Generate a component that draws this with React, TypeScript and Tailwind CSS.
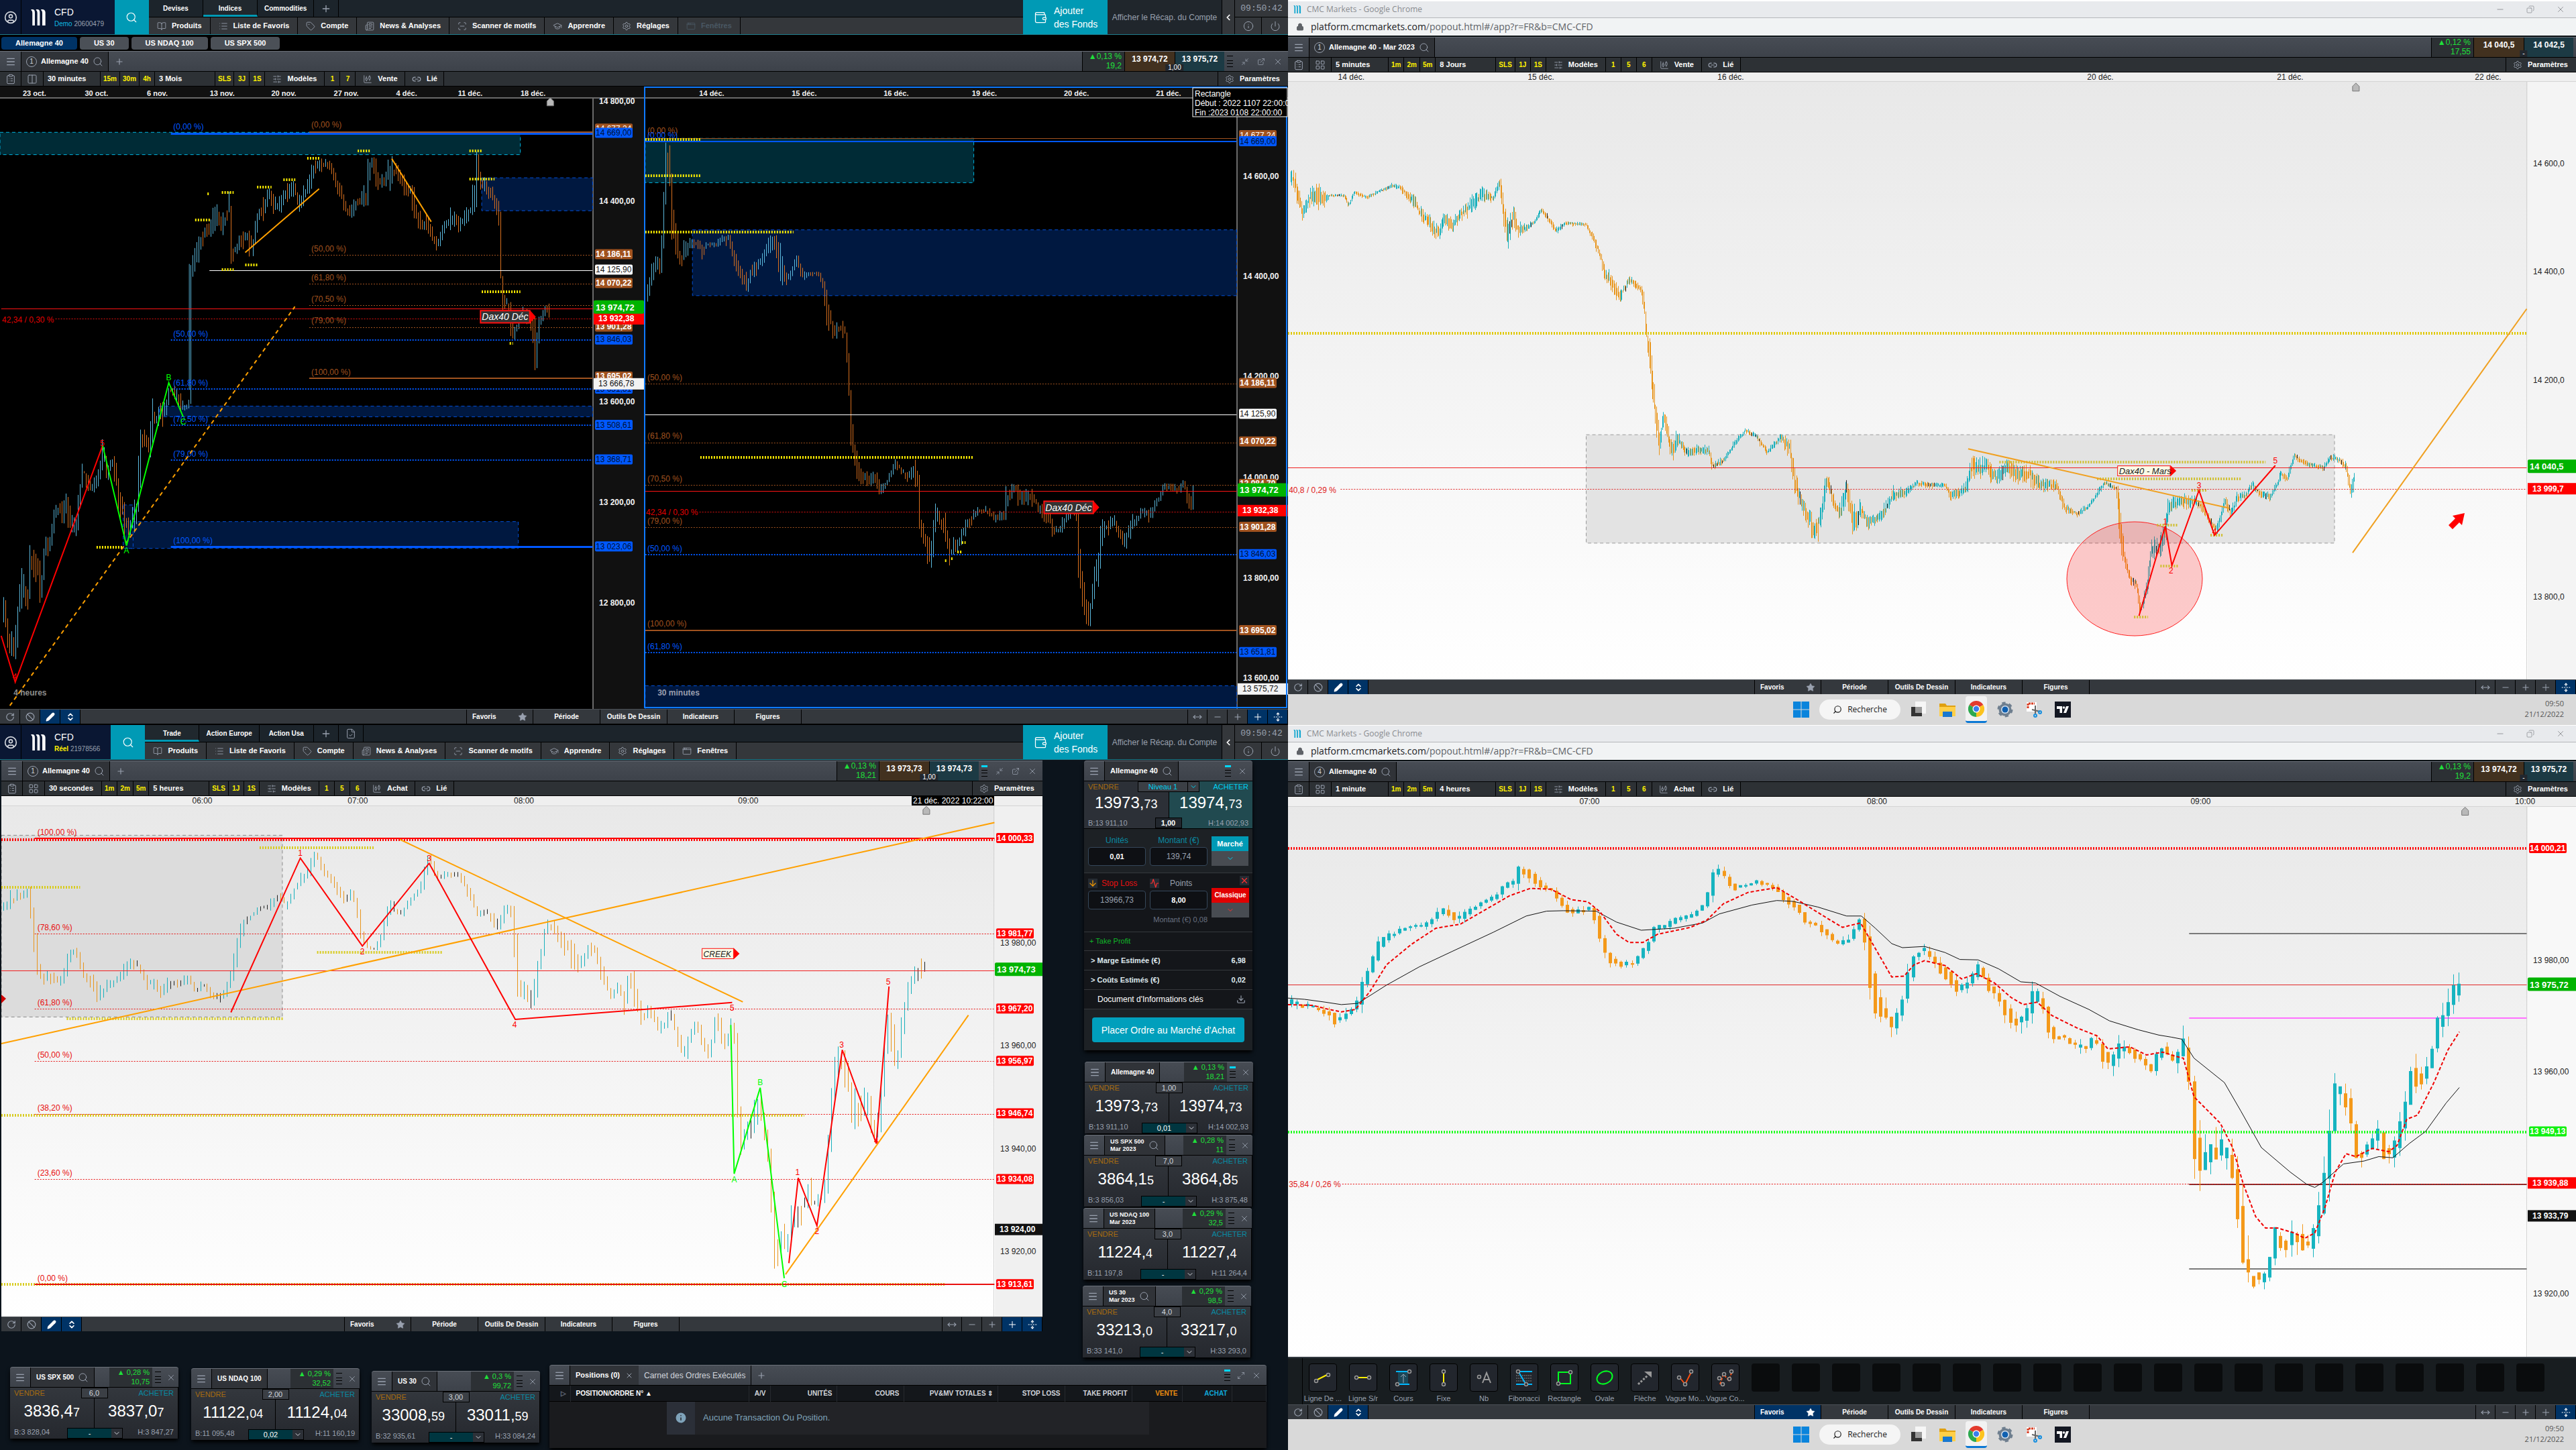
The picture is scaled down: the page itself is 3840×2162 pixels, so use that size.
import React, { createContext, useContext } from 'react';
import {
  Search,
  CircleUser,
  Menu,
  Plus,
  Minus,
  X,
  List,
  Tag as TagIcon,
  Newspaper,
  ScanLine,
  GraduationCap,
  Settings,
  AppWindow,
  Wallet,
  Info,
  Power,
  ChevronLeft,
  ChevronDown,
  BookOpen,
  SlidersHorizontal,
  ChartCandlestick,
  Link2,
  RotateCcw,
  Ban,
  Pencil,
  ChevronsUpDown,
  Star,
  MoveHorizontal,
  UnfoldVertical,
  Minimize2,
  Maximize2,
  ExternalLink,
  ClipboardList,
  Columns2,
  LayoutGrid,
  Lock,
  Copy,
  Download,
  ArrowDown,
  Activity,
  FileCheck,
} from 'lucide-react';

/* ---------- plot primitives ---------- */

type Pt = number[];

interface Scale {
  x: (v: number) => number;
  y: (v: number) => number;
  ax: number;
}

const makeScale = (kx: number, ky: number, dy: number, ax: number): Scale => ({
  x: (v) => Math.round(v * kx * 10) / 10,
  y: (v) => Math.round((v * ky + dy) * 10) / 10,
  ax,
});

const PlotScale = createContext<Scale>(makeScale(1, 1, 0, 0));

interface LineProps {
  p: Pt[];
  c: string;
  w?: number;
  dash?: string;
}

const Poly: React.FC<LineProps> = ({ p, c, w = 1, dash }) => {
  const s = useContext(PlotScale);
  // horizontal lines snap to the pixel grid
  const level = p.length === 2 && p[0][1] === p[1][1];
  const fy = (y: number) => (level ? Math.round(s.y(y)) + (w % 2) / 2 : s.y(y));
  return (
    <polyline
      points={p.map(([x, y]) => `${s.x(x)},${fy(y)}`).join(' ')}
      fill="none"
      stroke={c}
      strokeWidth={w}
      strokeDasharray={dash}
    />
  );
};

const Dots: React.FC<{ rows: number[][]; c?: string; w?: number }> = ({ rows, c = '#ffee00', w = 4 }) => (
  <>
    {rows.map(([x1, x2, y], i) => (
      <Poly key={i} p={[[x1, y], [x2, y]]} c={c} w={w} dash="2 2" />
    ))}
  </>
);

interface BoxProps {
  a: Pt;
  b: Pt;
  fill: string;
  stroke: string;
  opacity?: number;
}

const Box: React.FC<BoxProps> = ({ a, b, fill, stroke, opacity = 1 }) => {
  const s = useContext(PlotScale);
  return (
    <rect
      x={s.x(a[0])}
      y={s.y(a[1])}
      width={s.x(b[0]) - s.x(a[0])}
      height={s.y(b[1]) - s.y(a[1])}
      fill={fill}
      fillOpacity={opacity}
      stroke={stroke}
      strokeDasharray="5 4"
    />
  );
};

interface TxProps {
  at: Pt;
  c: string;
  size?: number;
  bold?: boolean;
  mid?: boolean;
  children: React.ReactNode;
}

const Tx: React.FC<TxProps> = ({ at, c, size = 12, bold, mid, children }) => {
  const s = useContext(PlotScale);
  return (
    <text
      x={s.x(at[0])}
      y={s.y(at[1]) + 4}
      fill={c}
      fontSize={size}
      fontWeight={bold ? 700 : 400}
      textAnchor={mid ? 'middle' : 'start'}
    >
      {children}
    </text>
  );
};

interface PriceTagProps {
  y: number;
  bg: string;
  c: string;
  wide?: boolean;
  big?: boolean;
  bold?: boolean;
  children: React.ReactNode;
}

const PriceTag: React.FC<PriceTagProps> = ({ y, bg, c, wide, big, bold, children }) => {
  const s = useContext(PlotScale);
  const h = big ? 20 : wide ? 17 : 15;
  return (
    <g>
      <rect x={s.ax + (wide || big ? 0 : 2)} y={s.y(y) - h / 2} width={wide || big ? 75 : 56} height={h} rx={wide ? 0 : 2} fill={bg} />
      <text x={s.ax + (wide ? 7 : 3)} y={s.y(y) + (big ? 5 : 4)} fill={c} fontSize={big ? 13 : 12} fontWeight={bold ? 700 : 400}>
        {children}
      </text>
    </g>
  );
};

// small deterministic generator so the bars do not move between renders
const rng = (seed: number) => () => {
  seed = (seed * 16807) % 2147483647;
  return seed / 2147483647;
};

const sample = (path: Pt[], x: number) => {
  let i = 1;
  while (i < path.length - 1 && path[i][0] < x) i++;
  const [x0, y0, a0 = 20] = path[i - 1];
  const [x1, y1, a1 = 20] = path[i];
  const t = Math.min(1, Math.max(0, (x - x0) / (x1 - x0)));
  return [y0 + (y1 - y0) * t, a0 + (a1 - a0) * t];
};

interface BarsProps {
  path: Pt[];
  step: number;
  seed: number;
  up: string;
  down: string;
  flat?: string;
  flatAt?: number;
  w?: number;
  body?: number;
  amp?: number;
}

const Bars: React.FC<BarsProps> = ({ path, step, seed, up, down, flat, flatAt = 1, w = 1, body = 0, amp = 1 }) => {
  const s = useContext(PlotScale);
  const rand = rng(seed);
  const out: React.ReactNode[] = [];
  for (let x = path[0][0]; x <= path[path.length - 1][0]; x += step) {
    const [o] = sample(path, x - step);
    const [y, a] = sample(path, x);
    const close = y + (rand() - 0.5) * a * amp;
    const hi = Math.min(o, close) - a * (0.1 + rand() * 0.9) * amp;
    const lo = Math.max(o, close) + a * (0.1 + rand() * 0.9) * amp;
    const color = flat && Math.abs(close - o) < flatAt ? flat : close < o ? up : down;
    const px = Math.round(s.x(x)) + 0.5;
    out.push(
      <g key={x} stroke={color} fill={color}>
        <line x1={px} x2={px} y1={s.y(hi)} y2={s.y(lo)} strokeWidth={w} />
        {body > 0 && (
          <rect
            x={px - body / 2}
            y={s.y(Math.min(o, close) - a * 0.2)}
            width={body}
            height={Math.max(2, s.y(Math.max(o, close) + a * 0.4) - s.y(Math.min(o, close)))}
            stroke="none"
          />
        )}
      </g>
    );
  }
  return <>{out}</>;
};

const Callout: React.FC<{ a: Pt; b: Pt; dark?: boolean; size?: number; children: string }> = ({ a, b, dark, size = 14, children }) => {
  const s = useContext(PlotScale);
  const x2 = s.x(b[0]);
  const y1 = s.y(a[1]);
  const y2 = s.y(b[1]);
  const my = (y1 + y2) / 2;
  return (
    <g>
      <path d={`M${x2} ${y1 - 1} L${x2 + 9} ${my} L${x2} ${y2 + 1}Z`} fill="#ff0000" />
      <rect x={s.x(a[0])} y={y1} width={x2 - s.x(a[0])} height={y2 - y1} fill={dark ? '#333333' : '#fafae6'} stroke="#ff1010" strokeWidth={dark ? 2 : 1} />
      <text x={s.x(a[0]) + 2} y={my + 5} fontSize={size} fontStyle="italic" fill={dark ? '#ffffff' : '#222222'}>
        {children}
      </text>
    </g>
  );
};

const Marker: React.FC<{ at: Pt }> = ({ at }) => {
  const s = useContext(PlotScale);
  const x = s.x(at[0]);
  const y = s.y(at[1]);
  return <path d={`M${x} ${y - 6} l5 5 v7 h-10 v-7z`} fill="#b9b9b9" stroke="#777" />;
};

interface PlotProps {
  s: Scale;
  className: string;
  dark?: boolean;
  head: number;
  dates: [string, number][];
  dateY: number;
  prices: [string, number][];
  axisBg?: string;
  children: React.ReactNode;
}

const Plot: React.FC<PlotProps> = ({ s, className, dark, head, dates, dateY, prices, axisBg, children }) => (
  <PlotScale.Provider value={s}>
    <svg className={`block w-full ${className}`}>
      <rect x={s.ax} y={0} width="200" height="100%" fill={axisBg ?? '#111111'} />
      <rect x={0} y={0} width="100%" height={head} fill={dark ? '#111111' : '#efefef'} />
      <rect x={0} y={head} width="100%" height={dark ? 2 : 1} fill={dark ? '#6a6a6a' : '#d4d4d4'} />
      <rect x={s.ax - 2} y={head + 1} width={dark ? 2 : 1} height="100%" fill={dark ? '#6a6a6a' : '#d4d4d4'} />
      {dates.map(([t, x]) => (
        <Tx key={t} at={[x, dateY]} c={dark ? '#f2f2f2' : '#222222'} size={dark ? 11 : 12} bold={dark} mid>
          {t}
        </Tx>
      ))}
      {prices.map(([t, y]) => (
        <text key={t} x={s.ax + 8} y={s.y(y) + 4} fontSize={12} fontWeight={dark ? 700 : 400} fill={dark ? '#f2f2f2' : '#222222'}>
          {t}
        </text>
      ))}
      {children}
    </svg>
  </PlotScale.Provider>
);

/* ---------- chart data ---------- */

const DAX_4H: Pt[] = [
  [8, 1300, 45], [20, 1370, 40], [37, 1380, 50], [42, 1290], [52, 1220, 40], [65, 1260, 40], [72, 1160, 30], [85, 1180, 30],
  [97, 1230, 50], [108, 1120, 30], [115, 1140], [125, 1090], [133, 1040], [148, 1045], [160, 1020, 50], [170, 1080], [182, 1090, 30],
  [190, 1010, 30], [198, 945], [210, 970], [220, 990], [232, 970], [250, 900, 40], [258, 950], [270, 920], [280, 950, 30],
  [290, 1020, 40], [300, 1060, 30], [310, 1090], [330, 1040, 40], [335, 960, 50], [342, 850, 50], [352, 870], [362, 890],
  [370, 810, 40], [380, 820], [390, 790, 30], [398, 810, 30], [405, 760, 30], [412, 740], [422, 750], [430, 760, 30], [440, 790],
  [450, 790, 15], [459, 775, 10], [462, 450, 20], [466, 450], [475, 420, 30], [485, 380, 30], [500, 345], [510, 350], [525, 300, 40],
  [535, 350], [545, 320, 30], [556, 290, 40], [560, 400, 50], [570, 400, 15], [580, 380], [600, 370, 25], [612, 400, 30],
  [618, 350], [630, 300], [640, 290, 30], [655, 260, 15], [665, 300], [680, 290], [695, 260, 30], [715, 245, 20], [722, 290],
  [735, 275], [750, 240], [760, 200, 25], [775, 190, 15], [785, 190], [800, 190, 10], [812, 225], [825, 260, 30], [840, 300],
  [852, 310, 15], [865, 280], [880, 270], [890, 270, 40], [897, 190, 30], [905, 180, 15], [915, 230, 30], [930, 230], [940, 220],
  [946, 240, 60], [955, 200], [970, 210], [985, 250], [1000, 260], [1010, 310, 35], [1025, 340], [1035, 330], [1050, 370],
  [1062, 390, 15], [1075, 350], [1090, 330, 30], [1100, 320, 30], [1115, 340], [1130, 320], [1145, 300], [1155, 260, 50],
  [1160, 170, 60], [1165, 230, 30], [1175, 240], [1190, 260, 30], [1200, 270], [1210, 300], [1216, 340, 30], [1219, 520, 30],
  [1225, 530], [1240, 540], [1244, 620, 25], [1250, 600], [1260, 580, 15], [1270, 560], [1280, 560], [1295, 590],
  [1298, 640, 40], [1302, 660, 60], [1308, 590, 30], [1320, 560], [1328, 540, 15], [1336, 560],
];

const DAX_30M: Pt[] = [
  [8, 510, 40], [15, 460], [25, 445], [40, 430, 30], [46, 300, 90], [52, 190, 50], [60, 190, 50], [66, 330, 50], [75, 360, 40],
  [85, 430], [95, 410, 30], [105, 390], [118, 380, 12], [140, 400], [150, 388, 8], [175, 385, 10], [190, 372, 8], [205, 375, 15],
  [215, 415], [225, 440], [240, 475, 15], [250, 480, 30], [260, 450], [275, 440], [290, 410], [300, 390], [318, 380], [325, 430],
  [331, 450, 50], [345, 470], [355, 465, 15], [370, 420], [385, 465, 12], [400, 458, 6], [425, 460, 7], [435, 490, 15], [445, 560, 25],
  [455, 580, 20], [462, 610], [470, 590], [480, 590], [490, 610], [495, 700, 30], [500, 800, 30], [506, 900, 50], [515, 920, 40],
  [525, 970, 25], [535, 960], [550, 970, 15], [560, 955, 15], [572, 990, 15], [585, 980, 12], [595, 960, 10], [610, 925, 10],
  [625, 945, 10], [640, 960, 10], [655, 940, 15], [665, 980, 40], [670, 1080, 30], [680, 1110], [694, 1160, 35], [702, 1080, 50],
  [710, 1050, 30], [722, 1080], [730, 1070, 30], [740, 1150, 30], [750, 1130], [765, 1120], [780, 1080], [795, 1060], [815, 1040, 12],
  [835, 1045, 10], [855, 1060, 15], [875, 1050, 15], [882, 1000, 30], [890, 1000], [902, 985, 25], [915, 1010], [930, 1010],
  [945, 1010, 25], [960, 1040, 15], [980, 1050], [995, 1090], [1010, 1090, 12], [1025, 1060, 15], [1040, 1040, 12], [1055, 1060],
  [1057, 1180, 50], [1065, 1240, 30], [1080, 1310, 30], [1090, 1250], [1097, 1200, 30], [1108, 1150, 60], [1112, 1090, 30],
  [1125, 1080], [1145, 1070], [1155, 1100], [1168, 1120], [1180, 1090, 25], [1195, 1070], [1210, 1045, 12], [1230, 1055, 15],
  [1245, 1020, 12], [1255, 1010, 12], [1263, 980, 12], [1280, 985, 12], [1300, 990, 12], [1310, 975, 10], [1320, 1000, 12],
  [1330, 1030, 30], [1336, 1010, 30],
];

const DAX_5M: Pt[] = [
  [3, 250, 25], [8, 260, 30], [17, 340], [25, 300], [35, 290, 35], [45, 300], [50, 293, 4], [68, 293, 4], [73, 318, 8], [80, 285, 5],
  [95, 298, 5], [110, 283, 5], [125, 270, 6], [137, 275, 8], [145, 295, 12], [155, 310], [160, 340], [170, 355], [182, 385],
  [190, 345], [200, 365], [210, 335], [222, 320], [235, 290], [250, 300, 10], [257, 260, 10], [262, 340, 30], [267, 390, 35],
  [273, 340, 40], [280, 380], [290, 370, 8], [300, 355, 8], [308, 325, 8], [318, 355, 8], [326, 380, 8], [336, 360, 6], [362, 362, 5],
  [370, 390, 10], [378, 430, 12], [385, 480], [395, 510], [403, 535], [415, 495, 12], [430, 520, 10], [433, 560, 20], [436, 630],
  [440, 680, 35], [445, 790, 40], [451, 890, 35], [457, 820], [466, 910, 30], [473, 880], [485, 912, 12], [500, 905, 12],
  [512, 910, 12], [516, 945, 10], [530, 930, 8], [540, 900, 8], [556, 858, 6], [570, 875, 8], [583, 912, 8], [590, 895, 8],
  [600, 875, 10], [610, 900, 25], [616, 980, 35], [625, 1040], [632, 1060, 25], [640, 1110, 35], [650, 1050, 35], [655, 975],
  [665, 1040], [672, 1050, 25], [679, 1000, 30], [688, 1080, 35], [697, 1050, 25], [705, 1080], [720, 1070, 15], [735, 1015],
  [750, 1010, 12], [765, 985, 8], [780, 990, 8], [800, 992, 6], [806, 1015, 12], [825, 1000], [832, 940, 30], [840, 950, 25],
  [850, 945, 25], [862, 975], [875, 945], [890, 965], [900, 960, 25], [915, 990], [935, 990, 15], [945, 1045, 12], [960, 1060, 8],
  [975, 1040, 8], [985, 1010, 8], [993, 985, 6], [1008, 1000, 8], [1012, 1080, 50], [1018, 1170, 25], [1025, 1220, 10],
  [1033, 1230, 15], [1037, 1290, 15], [1045, 1240], [1050, 1150, 25], [1060, 1140, 25], [1066, 1110, 50], [1072, 1040],
  [1085, 1030, 15], [1100, 1030], [1112, 1040, 12], [1120, 1070, 10], [1130, 1100, 12], [1140, 1030, 15], [1147, 1060, 15],
  [1155, 1020, 12], [1165, 1015, 12], [1173, 990, 12], [1182, 1010, 12], [1195, 1020, 10], [1203, 990, 10], [1208, 965, 10],
  [1216, 975, 10], [1224, 920, 8], [1240, 940, 8], [1260, 950, 8], [1268, 925, 8], [1280, 930, 10], [1288, 950, 12],
  [1293, 1010], [1299, 960],
];

const DAX_30S: Pt[] = [
  [3, 330], [10, 310, 25], [20, 300], [38, 290, 15], [45, 370, 30], [52, 500, 30], [60, 540], [70, 525], [80, 540], [90, 530],
  [100, 470], [110, 445, 10], [120, 520], [135, 540], [145, 590, 25], [155, 555, 15], [170, 540, 12], [190, 490, 25], [205, 500, 15],
  [215, 545], [230, 550], [238, 570, 15], [250, 540], [265, 550, 15], [278, 530], [290, 570, 8], [300, 550, 15], [315, 580, 12],
  [326, 590], [335, 570, 12], [345, 520], [352, 440, 25], [362, 370], [375, 350, 12], [385, 330, 12], [395, 335, 10], [405, 310, 15],
  [412, 290], [425, 325], [440, 270, 15], [450, 250], [460, 220], [468, 180, 20], [475, 200], [485, 240, 15], [495, 255, 12],
  [505, 290], [515, 310, 12], [525, 290, 15], [533, 350], [538, 410], [550, 450, 5], [560, 450, 5], [570, 400, 15], [580, 330, 25],
  [590, 340], [597, 350, 12], [610, 315, 10], [622, 285, 8], [630, 260], [637, 180, 30], [645, 220], [655, 250, 12], [665, 235, 12],
  [685, 240, 12], [700, 290], [712, 350, 10], [725, 340], [740, 385], [750, 350, 25], [762, 320, 12], [768, 440, 50],
  [775, 600, 50], [782, 560, 25], [790, 590, 40], [796, 600, 50], [803, 500, 40], [815, 380], [825, 385], [835, 420],
  [850, 450, 40], [860, 500, 35], [870, 480], [880, 440], [890, 470], [900, 530, 25], [912, 580, 15], [922, 560, 15],
  [932, 600, 45], [940, 500, 25], [950, 600, 45], [960, 650], [970, 620], [985, 680], [1000, 640, 25], [1010, 690, 25],
  [1020, 760], [1030, 690, 30], [1040, 660], [1050, 720], [1060, 750], [1070, 630, 30], [1080, 720, 25], [1090, 720, 30],
  [1096, 640, 50], [1101, 850, 50], [1107, 1020, 60], [1115, 960, 40], [1125, 930, 50], [1131, 900, 50], [1140, 930, 60],
  [1147, 1020, 40], [1153, 1180, 50], [1160, 1340, 50], [1168, 1270, 40], [1175, 1290, 50], [1185, 1190, 50], [1195, 1190, 60],
  [1208, 1130, 50], [1215, 1190, 30], [1225, 1150, 40], [1235, 1110, 50], [1240, 920, 50], [1247, 800, 40], [1253, 750],
  [1262, 790, 45], [1272, 930, 70], [1285, 900, 50], [1297, 880, 50], [1307, 980, 40], [1315, 930, 30], [1322, 760, 50],
  [1330, 620, 50], [1337, 780, 50], [1345, 740, 50], [1352, 610, 30], [1362, 540, 25], [1372, 500, 45], [1384, 500, 45],
];

const DAX_1M: Pt[] = [
  [4, 685, 12], [10, 690, 12], [20, 690, 10], [40, 705, 8], [55, 715, 15], [58, 730, 20], [75, 700, 10], [85, 680, 15], [90, 630],
  [100, 590, 15], [110, 540, 15], [120, 520, 8], [145, 495, 8], [165, 495, 6], [180, 465, 10], [190, 455, 10], [205, 480, 12],
  [220, 455, 8], [235, 435, 6], [250, 425, 6], [262, 395, 12], [275, 385, 8], [281, 355, 25], [290, 360, 15], [305, 395, 8],
  [320, 410, 8], [335, 450, 10], [345, 462, 12], [365, 450, 8], [375, 480, 12], [381, 550, 15], [390, 575, 12], [405, 590, 6],
  [420, 585, 8], [435, 545, 10], [445, 500, 12], [460, 495, 8], [470, 480, 6], [490, 470, 6], [505, 440, 10], [512, 410, 25],
  [519, 350, 20], [530, 375, 10], [540, 400, 12], [555, 395, 4], [570, 385, 4], [590, 400, 6], [605, 430, 8], [620, 450, 12],
  [627, 485, 10], [640, 490, 8], [655, 515, 10], [665, 540, 8], [680, 530, 12], [695, 480, 8], [703, 540, 20], [710, 650, 50],
  [717, 690, 35], [735, 745, 25], [745, 690, 12], [755, 610], [763, 550], [775, 560, 12], [790, 595, 12], [800, 610],
  [815, 655, 10], [828, 630, 15], [840, 600, 15], [850, 640, 15], [870, 690], [880, 730, 12], [895, 720, 30], [908, 665, 30],
  [920, 700], [928, 770, 10], [940, 765, 12], [955, 790, 12], [970, 795, 15], [980, 775, 12], [998, 835, 35], [1010, 800],
  [1020, 795, 15], [1035, 820, 12], [1050, 850, 12], [1062, 790, 15], [1075, 830, 12], [1088, 790, 50], [1095, 850, 50],
  [1100, 1000, 60], [1110, 1090, 50], [1120, 1050, 50], [1130, 1050, 50], [1145, 1070, 40], [1152, 1130, 45], [1160, 1280, 60],
  [1165, 1390, 60], [1172, 1340, 50], [1180, 1370, 25], [1190, 1350, 25], [1200, 1260, 40], [1212, 1280, 20], [1225, 1250, 35],
  [1240, 1290, 20], [1250, 1240, 20], [1258, 1150, 40], [1265, 1040, 60], [1272, 900, 35], [1280, 910, 30], [1290, 930, 20],
  [1298, 1060, 40], [1310, 1050], [1325, 1000, 30], [1337, 1070, 35], [1348, 1030, 20], [1358, 940, 30], [1368, 830, 60],
  [1375, 880, 25], [1388, 830, 35], [1398, 740, 25], [1408, 700, 35], [1418, 660, 25], [1427, 645, 35],
];

const MA_FAST: Pt[] = [
  [0, 688], [30, 690], [50, 700], [65, 706], [82, 700], [100, 655], [120, 590], [150, 540], [180, 500], [210, 490], [240, 455],
  [270, 420], [295, 402], [320, 404], [345, 430], [365, 435], [380, 460], [400, 515], [415, 535], [432, 535], [450, 515],
  [490, 498], [510, 480], [530, 440], [560, 412], [595, 400], [620, 430], [640, 455], [660, 480], [675, 498], [697, 487],
  [715, 550], [735, 620], [750, 618], [762, 590], [775, 580], [800, 592], [820, 625], [838, 612], [860, 635], [880, 670],
  [895, 688], [912, 682], [930, 715], [960, 745], [985, 765], [998, 797], [1025, 792], [1045, 812], [1065, 805], [1080, 815],
  [1090, 820], [1103, 915], [1135, 980], [1150, 1040], [1163, 1130], [1178, 1210], [1190, 1238], [1205, 1238], [1225, 1250],
  [1238, 1263], [1250, 1250], [1262, 1190], [1275, 1100], [1288, 1055], [1300, 1062], [1320, 1042], [1340, 1050], [1350, 1035],
  [1362, 970], [1375, 960], [1395, 880], [1412, 800], [1426, 755],
];

const MA_SLOW: Pt[] = [
  [0, 672], [20, 675], [45, 682], [65, 688], [85, 685], [120, 640], [160, 595], [200, 557], [250, 510], [290, 470], [315, 458],
  [335, 457], [375, 458], [400, 485], [430, 505], [470, 500], [505, 487], [525, 465], [565, 443], [595, 432], [615, 434],
  [645, 448], [680, 470], [698, 470], [715, 500], [735, 538], [748, 548], [775, 545], [800, 560], [818, 577], [840, 578],
  [865, 600], [892, 632], [910, 635], [940, 668], [975, 700], [1000, 728], [1035, 750], [1060, 763], [1075, 768], [1088, 773],
  [1103, 820], [1140, 880], [1160, 950], [1185, 1040], [1220, 1100], [1240, 1130], [1250, 1138], [1260, 1125], [1285, 1080],
  [1310, 1073], [1328, 1062], [1345, 1065], [1365, 1030], [1385, 1000], [1410, 930], [1426, 892],
];

/* ---------- charts ---------- */

const BROWN = '#a0521f';
const BLUE = '#0058ff';
const ORANGE = '#ffa000';

const darkScale = makeScale(0.6122, 0.6059, 1, 885);

interface FibRow {
  label: string;
  y: number;
  labelY: number;
  solid?: boolean;
}

const Fib: React.FC<{ rows: FibRow[]; x: number; x2: number; tx: number; c: string; w?: number }> = ({ rows, x, x2, tx, c, w = 1 }) => (
  <>
    {rows.map((r) => (
      <g key={r.label}>
        <Poly p={[[x, r.y], [x2, r.y]]} c={c} w={r.solid ? w + 1 : w} dash={r.solid ? undefined : '2 2'} />
        <Tx at={[tx, r.labelY]} c={c}>{r.label}</Tx>
      </g>
    ))}
  </>
);

const Chart4h = () => (
  <Plot
    s={darkScale}
    className="h-[928px]"
    dark
    head={16}
    dateY={14}
    dates={[['23 oct.', 84], ['30 oct.', 235], ['6 nov.', 383], ['13 nov.', 541], ['20 nov.', 691], ['27 nov.', 843], ['4 déc.', 990], ['11 déc.', 1145], ['18 déc.', 1298]]}
    prices={[['14 800,00', 34], ['14 400,00', 280], ['13 600,00', 774], ['13 200,00', 1021], ['12 800,00', 1269]]}
  >
    <Box a={[0, 111]} b={[1267, 166]} fill="#002b36" stroke="#00b4e0" />
    <Box a={[1173, 223]} b={[1443, 304]} fill="#001840" stroke="#0050d8" />
    <Box a={[388, 785]} b={[1443, 811]} fill="#001840" stroke="#0050d8" />
    <Box a={[307, 1069]} b={[1262, 1135]} fill="#001840" stroke="#0050d8" />
    <Box a={[300, 1028]} b={[324, 1135]} fill="#001840" stroke="#0050d8" opacity={0.6} />
    <Bars path={DAX_4H} step={4.9} seed={11} up="#5bb8dc" down="#d9701e" />
    <Poly p={[[461, 435], [461, 745]]} c="#5bb8dc" />
    <Poly p={[[753, 110], [1443, 110]]} c={BROWN} w={2} />
    <Poly p={[[416, 114], [1443, 114]]} c={BLUE} w={3} />
    <Tx at={[422, 98]} c={BLUE}>(0,00 %)</Tx>
    <Tx at={[758, 93]} c={BROWN}>(0,00 %)</Tx>
    <Fib
      x={753}
      x2={1443}
      tx={758}
      c={BROWN}
      rows={[
        { label: '(50,00 %)', y: 413, labelY: 397 },
        { label: '(61,80 %)', y: 484, labelY: 468 },
        { label: '(70,50 %)', y: 537, labelY: 521 },
        { label: '(79,00 %)', y: 590, labelY: 574 },
        { label: '(100,00 %)', y: 717, labelY: 701, solid: true },
      ]}
    />
    <Fib
      x={416}
      x2={1443}
      tx={422}
      c={BLUE}
      w={2}
      rows={[
        { label: '(50,00 %)', y: 622, labelY: 607 },
        { label: '(61,80 %)', y: 742, labelY: 727 },
        { label: '(70,50 %)', y: 831, labelY: 817 },
        { label: '(79,00 %)', y: 917, labelY: 902 },
        { label: '(100,00 %)', y: 1130, labelY: 1115, solid: true },
      ]}
    />
    <Poly p={[[510, 451], [1443, 451]]} c="#ffffff" />
    <Poly p={[[3, 544], [1443, 544]]} c="#ff1414" />
    <Poly p={[[135, 570], [1443, 570]]} c="#e01010" dash="2 2" />
    <Tx at={[5, 572]} c="#e00000">42,34 / 0,30 %</Tx>
    <Poly p={[[597, 407], [777, 250]]} c={ORANGE} w={2} />
    <Poly p={[[954, 176], [1050, 331]]} c={ORANGE} w={2} />
    <Poly p={[[24, 1522], [718, 540]]} c={ORANGE} w={2} dash="6 5" />
    <Poly p={[[3, 1350], [37, 1464], [250, 882]]} c="#ff0000" w={2} />
    <Poly p={[[250, 882], [308, 1128], [411, 727], [446, 811]]} c="#00ff00" w={2} />
    <Dots
      rows={[
        [871, 901, 157], [1143, 1173, 157], [748, 778, 175], [690, 719, 228], [626, 661, 246], [540, 569, 259], [475, 511, 327],
        [540, 569, 449], [597, 627, 437], [1143, 1204, 226], [1173, 1267, 503], [235, 300, 1132], [505, 509, 262], [1241, 1249, 630],
      ]}
    />
    <Tx at={[308, 1141]} c="#00ff00" mid>A</Tx>
    <Tx at={[411, 714]} c="#00ff00" mid>B</Tx>
    <Tx at={[446, 823]} c="#00ff00" mid>C</Tx>
    <Tx at={[249, 877]} c="#ff0000" mid>5</Tx>
    <Tx at={[36, 1451]} c="#ff0000" mid>4</Tx>
    <Callout a={[1170, 550]} b={[1290, 580]} dark>Dax40 Déc</Callout>
    <Marker at={[1340, 36]} />
    <Tx at={[33, 1491]} c="#8d8d8d" bold>4 heures</Tx>
    <PriceTag y={102} bg={BROWN} c="#fff">14 677,24</PriceTag>
    <PriceTag y={112} bg={BLUE} c="#001030">14 669,00</PriceTag>
    <PriceTag y={411} bg={BROWN} c="#fff" bold>14 186,11</PriceTag>
    <PriceTag y={449} bg="#ffffff" c="#111">14 125,90</PriceTag>
    <PriceTag y={482} bg={BROWN} c="#fff" bold>14 070,22</PriceTag>
    <PriceTag y={589} bg={BROWN} c="#fff" bold>13 901,28</PriceTag>
    <PriceTag y={570} bg="#ff0000" c="#fff" wide bold>13 932,38</PriceTag>
    <PriceTag y={541} bg="#00b300" c="#fff" big bold>13 974,72</PriceTag>
    <PriceTag y={621} bg={BLUE} c="#001030">13 846,03</PriceTag>
    <PriceTag y={712} bg={BROWN} c="#fff" bold>13 695,02</PriceTag>
    <PriceTag y={742} bg={BLUE} c="#001030">13 651,81</PriceTag>
    <PriceTag y={730} bg="#f2f2f2" c="#111" wide>13 666,78</PriceTag>
    <PriceTag y={831} bg={BLUE} c="#001030">13 508,61</PriceTag>
    <PriceTag y={916} bg={BLUE} c="#001030">13 368,71</PriceTag>
    <PriceTag y={1130} bg={BLUE} c="#001030">13 023,06</PriceTag>
  </Plot>
);

const Chart30m = () => (
  <Plot
    s={darkScale}
    className="h-[928px]"
    dark
    head={16}
    dateY={14}
    dates={[['14 déc.', 165], ['15 déc.', 390], ['16 déc.', 614], ['19 déc.', 829], ['20 déc.', 1053], ['21 déc.', 1277]]}
    prices={[['14 600,00', 219], ['14 400,00', 465], ['14 200,00', 712], ['14 000,00', 960], ['13 800,00', 1208], ['13 600,00', 1454]]}
  >
    <Box a={[3, 126]} b={[803, 235]} fill="#002b36" stroke="#00b4e0" />
    <Box a={[118, 351]} b={[1443, 513]} fill="#001840" stroke="#0050d8" />
    <Box a={[3, 1473]} b={[1443, 1600]} fill="#001840" stroke="#0050d8" />
    <Bars path={DAX_30M} step={4.9} seed={23} up="#5bb8dc" down="#d9701e" />
    <Poly p={[[3, 125], [1443, 125]]} c={BROWN} />
    <Poly p={[[3, 133], [1443, 133]]} c={BLUE} w={2} />
    <Tx at={[8, 108]} c={BROWN}>(0,00 %)</Tx>
    <Tx at={[8, 118]} c={BLUE}>(0,00 %)</Tx>
    <Fib
      x={3}
      x2={1443}
      tx={8}
      c={BROWN}
      rows={[
        { label: '(50,00 %)', y: 730, labelY: 714 },
        { label: '(61,80 %)', y: 874, labelY: 858 },
        { label: '(70,50 %)', y: 979, labelY: 963 },
        { label: '(79,00 %)', y: 1083, labelY: 1067 },
        { label: '(100,00 %)', y: 1337, labelY: 1321, solid: true },
      ]}
    />
    <Fib
      x={3}
      x2={1443}
      tx={8}
      c={BLUE}
      w={2}
      rows={[
        { label: '(50,00 %)', y: 1150, labelY: 1135 },
        { label: '(61,80 %)', y: 1391, labelY: 1376 },
      ]}
    />
    <Poly p={[[3, 805], [1443, 805]]} c="#ffffff" />
    <Poly p={[[3, 993], [1443, 993]]} c="#ff1414" />
    <Poly p={[[135, 1044], [1443, 1044]]} c="#e01010" dash="2 2" />
    <Tx at={[5, 1046]} c="#e00000">42,34 / 0,30 %</Tx>
    <Dots
      rows={[
        [3, 138, 129], [3, 138, 218], [3, 364, 356], [137, 801, 911], [733, 738, 1165], [748, 752, 1160], [763, 773, 1144], [774, 783, 1120],
      ]}
    />
    <Callout a={[974, 1019]} b={[1094, 1049]} dark>Dax40 Déc</Callout>
    <Tx at={[33, 1491]} c="#9a9eae" bold>30 minutes</Tx>
    <PriceTag y={118} bg={BROWN} c="#fff">14 677,24</PriceTag>
    <PriceTag y={133} bg={BLUE} c="#001030">14 669,00</PriceTag>
    <PriceTag y={728} bg={BROWN} c="#fff" bold>14 186,11</PriceTag>
    <PriceTag y={804} bg="#ffffff" c="#111">14 125,90</PriceTag>
    <PriceTag y={872} bg={BROWN} c="#fff" bold>14 070,22</PriceTag>
    <PriceTag y={976} bg={BROWN} c="#fff" bold>13 984,79</PriceTag>
    <PriceTag y={991} bg="#00b300" c="#fff" big bold>13 974,72</PriceTag>
    <PriceTag y={1042} bg="#ff0000" c="#fff" wide bold>13 932,38</PriceTag>
    <PriceTag y={1082} bg={BROWN} c="#fff" bold>13 901,28</PriceTag>
    <PriceTag y={1149} bg={BLUE} c="#001030">13 846,03</PriceTag>
    <PriceTag y={1336} bg={BROWN} c="#fff" bold>13 695,02</PriceTag>
    <PriceTag y={1390} bg={BLUE} c="#001030">13 651,81</PriceTag>
    <PriceTag y={1481} bg="#f2f2f2" c="#111" wide>13 575,72</PriceTag>
    <rect x="1" y="1" width="957" height="925" fill="none" stroke="#0f7bff" strokeWidth="2" />
    <rect x="818" y="2" width="141" height="43" fill="#000" stroke="#fff" strokeWidth="1" />
    <Tx at={[1341, 16]} c="#fff">Rectangle</Tx>
    <Tx at={[1341, 39]} c="#fff">Début : 2022 1107 22:00:00</Tx>
    <Tx at={[1341, 62]} c="#fff">Fin :2023 0108 22:00:00</Tx>
  </Plot>
);

const Chart5m = () => (
  <Plot
    s={makeScale(1.2245, 0.6193, 2, 1848)}
    className="h-[905px] bg-linear-to-b from-[#e8e8e8] to-white"
    head={13}
    dateY={8}
    axisBg="#f4f4f4"
    dates={[['14 déc.', 77], ['15 déc.', 308], ['16 déc.', 539], ['20 déc.', 989], ['21 déc.', 1220], ['22 déc.', 1461]]}
    prices={[['14 600,0', 216], ['14 400,0', 476], ['14 200,0', 738], ['13 800,0', 1259]]}
  >
    <Box a={[363, 869]} b={[1274, 1130]} fill="#e3e3e3" stroke="#9a9a9a" />
    <Bars path={DAX_5M} step={1.2} seed={31} up="#18b0bc" down="#e8951c" flat="#222" flatAt={0.25} amp={0.9} />
    <ellipse cx="1262" cy="755" rx="101" ry="85" fill="#ff0000" fillOpacity="0.2" stroke="#ff2020" />
    <Dots rows={[[0, 1508, 625]]} c="#e0c800" />
    <Dots rows={[[866, 1190, 935], [985, 1160, 976], [1058, 1084, 1087], [1062, 1084, 1185], [1123, 1138, 1111], [1030, 1047, 1308], [1100, 1118, 1003]]} c="#cfbf30" />
    <Poly p={[[0, 947], [1508, 947]]} c="#f02020" />
    <Poly p={[[64, 1000], [1508, 1000]]} c="#e02020" dash="2 2" />
    <Tx at={[1, 1002]} c="#e02020">40,8 / 0,29 %</Tx>
    <Poly p={[[828, 903], [1146, 1046]]} c="#f0a020" w={2} />
    <Poly p={[[1296, 1153], [1508, 566]]} c="#f0a020" w={2} />
    <Poly p={[[1036, 1305], [1068, 1089], [1076, 1184], [1109, 1003], [1128, 1111], [1202, 943]]} c="#ff0000" w={2} />
    <Tx at={[1068, 1078]} c="#ff0000" mid>1</Tx>
    <Tx at={[1075, 1196]} c="#ff0000" mid>2</Tx>
    <Tx at={[1109, 992]} c="#ff0000" mid>3</Tx>
    <Tx at={[1128, 1102]} c="#ff0000" mid>4</Tx>
    <Tx at={[1202, 931]} c="#ff0000" mid>5</Tx>
    <Callout a={[1010, 944]} b={[1074, 968]} size={13}>Dax40  - Mars</Callout>
    <path d="M1730 675 l10 -10 -4 -4 18 -4 -4 18 -4 -4 -10 10z" fill="#ff0000" />
    <Marker at={[1300, 32]} />
    <PriceTag y={945} bg="#00b300" c="#fff" big bold>14 040,5</PriceTag>
    <PriceTag y={999} bg="#ff0000" c="#fff" wide bold>13 999,7</PriceTag>
  </Plot>
);

const Chart30s = () => (
  <Plot
    s={makeScale(0.9949, 0.523, -7, 1481)}
    className="h-[776px] bg-linear-to-b from-[#e8e8e8] to-white"
    head={14}
    dateY={26}
    axisBg="#f0f0f0"
    dates={[['06:00', 301], ['07:00', 534], ['08:00', 783], ['09:00', 1119]]}
    prices={[['13 980,00', 432], ['13 960,00', 724], ['13 940,00', 1019], ['13 920,00', 1311]]}
  >
    <Box a={[0, 125]} b={[421, 643]} fill="#dcdcdc" stroke="#8a8a8a" />
    <Bars path={DAX_30S} step={5} seed={47} up="#18b0bc" down="#e8951c" flat="#222" flatAt={3} amp={0.9} />
    <Dots rows={[[0, 118, 273], [387, 559, 160], [473, 660, 459], [98, 422, 648], [0, 1203, 924], [0, 1415, 1405]]} c="#d8cc20" />
    <Poly p={[[0, 137], [1488, 137]]} c="#ff0000" w={4} dash="2 2" />
    <Poly p={[[50, 133], [1488, 133]]} c="#ff0000" w={2} />
    <Fib
      x={50}
      x2={1488}
      tx={54}
      c="#e81010"
      w={1}
      rows={[
        { label: '(78,60 %)', y: 405, labelY: 388 },
        { label: '(61,80 %)', y: 619, labelY: 602 },
        { label: '(50,00 %)', y: 769, labelY: 751 },
        { label: '(38,20 %)', y: 919, labelY: 902 },
        { label: '(23,60 %)', y: 1105, labelY: 1087 },
        { label: '(0,00 %)', y: 1405, labelY: 1388, solid: true },
      ]}
    />
    <Tx at={[54, 116]} c="#e81010">(100,00 %)</Tx>
    <Poly p={[[0, 510], [1488, 510]]} c="#f02020" />
    <Poly p={[[0, 719], [1488, 89]]} c={ORANGE} w={2} />
    <Poly p={[[597, 137], [1111, 600]]} c={ORANGE} w={2} />
    <Poly p={[[1175, 1377], [1449, 638]]} c={ORANGE} w={2} />
    <Poly p={[[344, 630], [448, 190], [541, 441], [641, 205], [770, 650], [1095, 602]]} c="#ff0000" w={2} />
    <Poly p={[[1180, 1345], [1194, 1102], [1222, 1238], [1260, 737], [1311, 1004], [1330, 556]]} c="#ff0000" w={2} />
    <Poly p={[[1093, 666], [1098, 1090], [1137, 845], [1173, 1388]]} c="#00ff00" w={2} />
    <Tx at={[448, 176]} c="#ff0000" mid>1</Tx>
    <Tx at={[541, 457]} c="#ff0000" mid>2</Tx>
    <Tx at={[641, 191]} c="#ff0000" mid>3</Tx>
    <Tx at={[769, 665]} c="#ff0000" mid>4</Tx>
    <Tx at={[1095, 617]} c="#ff0000" mid>5</Tx>
    <Tx at={[1193, 1086]} c="#ff0000" mid>1</Tx>
    <Tx at={[1222, 1254]} c="#ff0000" mid>2</Tx>
    <Tx at={[1259, 722]} c="#ff0000" mid>3</Tx>
    <Tx at={[1311, 996]} c="#ff0000" mid>4</Tx>
    <Tx at={[1329, 543]} c="#ff0000" mid>5</Tx>
    <Tx at={[1098, 1107]} c="#00ff00" mid>A</Tx>
    <Tx at={[1137, 829]} c="#00ff00" mid>B</Tx>
    <Tx at={[1173, 1405]} c="#00ff00" mid>C</Tx>
    <Callout a={[1050, 448]} b={[1097, 477]} size={12}>CREEK</Callout>
    <path d="M0 296 l7 6 -7 7z" fill="#d00000" />
    <rect x="1357" y="0" width="123" height="14" fill="#000" />
    <Tx at={[1366, 26]} c="#fff">21 déc. 2022 10:22:00</Tx>
    <Marker at={[1386, 54]} />
    <PriceTag y={133} bg="#ff0000" c="#fff" bold>14 000,33</PriceTag>
    <PriceTag y={405} bg="#ff0000" c="#fff" bold>13 981,77</PriceTag>
    <PriceTag y={507} bg="#00b300" c="#fff" big bold>13 974,73</PriceTag>
    <PriceTag y={619} bg="#ff0000" c="#fff" bold>13 967,20</PriceTag>
    <PriceTag y={768} bg="#ff0000" c="#fff" bold>13 956,97</PriceTag>
    <PriceTag y={918} bg="#ff0000" c="#fff" bold>13 946,74</PriceTag>
    <PriceTag y={1105} bg="#ff0000" c="#fff" bold>13 934,08</PriceTag>
    <PriceTag y={1249} bg="#111" c="#fff" wide bold>13 924,00</PriceTag>
    <PriceTag y={1405} bg="#ff0000" c="#fff" bold>13 913,61</PriceTag>
  </Plot>
);

const Chart1m = () => (
  <Plot
    s={makeScale(1.2245, 0.6059, -107, 1848)}
    className="h-[835px] bg-linear-to-b from-[#e8e8e8] to-white"
    head={14}
    dateY={188}
    axisBg="#f8f8f8"
    dates={[['07:00', 367], ['08:00', 717], ['09:00', 1111], ['10:00', 1506]]}
    prices={[['13 980,00', 579], ['13 960,00', 853], ['13 920,00', 1399]]}
  >
    <Dots rows={[[0, 1508, 303]]} c="#ff1010" />
    <Poly p={[[0, 639], [1508, 639]]} c="#e02828" />
    <Poly p={[[1097, 513], [1508, 513]]} c="#7a7a7a" w={2} />
    <Poly p={[[1097, 1130], [1508, 1130]]} c="#7a3030" w={2} />
    <Poly p={[[1097, 1338], [1508, 1338]]} c="#7a7a7a" w={2} />
    <Poly p={[[1097, 721], [1508, 721]]} c="#ff70ff" w={2} />
    <Poly p={[[66, 1128], [1508, 1128]]} c="#e81010" dash="2 2" />
    <Tx at={[1, 1130]} c="#e02020">35,84 / 0,26 %</Tx>
    <Bars path={DAX_1M} step={6.58} seed={59} up="#16b4c0" down="#f4991a" body={5} amp={1.3} />
    <Dots rows={[[0, 1508, 1002]]} c="#20ff20" />
    <Poly p={MA_SLOW} c="#111111" />
    <Poly p={MA_FAST} c="#f00000" w={2} dash="5 3" />
    <Marker at={[1433, 212]} />
    <PriceTag y={303} bg="#ff0000" c="#fff" bold>14 000,21</PriceTag>
    <PriceTag y={638} bg="#00b300" c="#fff" big bold>13 975,72</PriceTag>
    <PriceTag y={1000} bg="#10f010" c="#fff" bold>13 949,13</PriceTag>
    <PriceTag y={1127} bg="#ff0000" c="#fff" wide bold>13 939,88</PriceTag>
    <PriceTag y={1208} bg="#111" c="#fff" wide bold>13 933,79</PriceTag>
  </Plot>
);

/* ---------- platform chrome ---------- */

const CmcLogo = ({ className }: { className: string }) => (
  <svg viewBox="0 0 24 26" className={className} fill="currentColor">
    <path d="M0 0h2c3 0 4 2 4 5v21H2V6C2 3 1 2 0 1z" />
    <path d="M8 0h2c3 0 4 2 4 5v21h-4V6c0-3-1-4-2-5z" />
    <path d="M16 0h2c3 0 5 2 5 5v21h-5V6c0-3-1-4-2-5z" />
  </svg>
);

const MENU = [
  { label: 'Produits', icon: BookOpen },
  { label: 'Liste de Favoris', icon: List },
  { label: 'Compte', icon: TagIcon },
  { label: 'News & Analyses', icon: Newspaper },
  { label: 'Scanner de motifs', icon: ScanLine },
  { label: 'Apprendre', icon: GraduationCap },
  { label: 'Réglages', icon: Settings },
  { label: 'Fenêtres', icon: AppWindow },
];

interface HeaderProps {
  mode: string;
  modeClass: string;
  account: string;
  tabs: string[];
  active: string;
  dimWindows?: boolean;
  withNote?: boolean;
}

const Header: React.FC<HeaderProps> = ({ mode, modeClass, account, tabs, active, dimWindows, withNote }) => (
  <header className="flex h-[52px] border-b border-[#1f7d8c] bg-[#1c242b] text-white">
    <button aria-label="Profil" className="grid w-8 place-items-center border-r border-black bg-[#0a1733]">
      <CircleUser className="h-5 w-5 text-gray-300" />
    </button>
    <div className="flex items-center gap-3 bg-[#0a1733] pl-3.5 pr-4">
      <CmcLogo className="h-6 w-[23px]" />
      <div className="leading-4">
        <div className="text-sm">CFD</div>
        <div className="text-[10px] text-gray-400">
          <span className={modeClass}>{mode}</span> {account}
        </div>
      </div>
    </div>
    <button aria-label="Rechercher" className="grid w-[51px] place-items-center bg-[#009ab5]">
      <Search className="h-[18px] w-[18px]" strokeWidth={1.5} />
    </button>
    <div className="flex min-w-0 flex-1 flex-col">
      <div className="flex h-[26px] border-b border-black text-[10px] font-bold">
        {tabs.map((tab) => (
          <button
            key={tab}
            className={`min-w-[81px] border-r border-black px-2.5 ${tab === active ? 'border-b-3 border-b-[#009ab5] bg-[#20282e] pt-[3px]' : ''}`}
          >
            {tab}
          </button>
        ))}
        <button aria-label="Ajouter un onglet" className="grid w-[37px] place-items-center border-r border-black text-gray-400">
          <Plus className="h-4 w-4" />
        </button>
        {withNote && (
          <button aria-label="Modifier" className="grid w-[37px] place-items-center border-r border-black text-gray-400">
            <FileCheck className="h-4 w-4" strokeWidth={1.5} />
          </button>
        )}
      </div>
      <nav className="flex flex-1 bg-[#34373b] text-[11px] font-bold">
        {MENU.map(({ label, icon: Icon }) => {
          const dim = dimWindows && label === 'Fenêtres';
          return (
            <button key={label} className={`flex items-center gap-2 border-r border-black px-3 ${dim ? 'text-[#4a5763]' : ''}`}>
              <Icon className={`h-3.5 w-3.5 ${dim ? '' : 'text-gray-400'}`} strokeWidth={1.5} />
              {label}
            </button>
          );
        })}
      </nav>
    </div>
    <button className="flex w-[126px] items-center gap-2.5 bg-[#009ab5] pl-4 text-left text-sm leading-5">
      <Wallet className="h-5 w-5" strokeWidth={1.5} />
      <span>Ajouter<br />des Fonds</span>
    </button>
    <button className="w-[170px] bg-[#20262c] text-gray-400">Afficher le Récap. du Compte</button>
    <button aria-label="Replier" className="grid w-5 place-items-center border-x border-black bg-[#34373b]">
      <ChevronLeft className="h-3.5 w-3.5" strokeWidth={3} />
    </button>
    <div className="flex w-[79px] flex-col bg-[#34373b] text-gray-400">
      <time className="flex h-[26px] items-center justify-center border-b border-black font-['Liberation_Mono',monospace] text-[13px]">09:50:42</time>
      <div className="flex flex-1">
        <button aria-label="Information" className="grid flex-1 place-items-center border-r border-black"><Info className="h-4 w-4" strokeWidth={1.5} /></button>
        <button aria-label="Quitter" className="grid flex-1 place-items-center"><Power className="h-4 w-4" strokeWidth={1.5} /></button>
      </div>
    </div>
  </header>
);

const Gauge = ({ lit }: { lit?: boolean }) => (
  <span className="flex h-full w-[9px] flex-col justify-evenly py-0.5">
    <span className={`h-[3px] ${lit ? 'bg-[#00d8ff]' : 'border-t border-black'}`} />
    <span className="h-px bg-black" />
    <span className="h-px bg-black" />
    <span className="h-px bg-black" />
  </span>
);

interface TitleBarProps {
  num: string;
  name: string;
  pct: string;
  pts: string;
  sell: string;
  buy: string;
  spread: string;
  tabPlus?: boolean;
  windowButtons?: boolean;
  lit?: boolean;
}

const TitleBar: React.FC<TitleBarProps> = ({ num, name, pct, pts, sell, buy, spread, tabPlus, windowButtons, lit }) => (
  <div className="flex h-[31px] border-b border-t border-b-black border-t-[#6b7079] bg-linear-to-b from-[#474c54] to-[#3d424a] text-white">
    <button aria-label="Menu" className="grid w-8 place-items-center border-r border-black text-gray-400"><Menu className="h-4 w-4" /></button>
    <div className="flex items-center gap-1.5 border-r border-black bg-[#303338] px-[7px] text-[11px] font-bold">
      <span className="grid h-4 w-4 place-items-center rounded-full border border-gray-400 text-[10px] font-normal text-gray-300">{num}</span>
      {name}
      <Search className="h-4 w-4 text-gray-400" strokeWidth={1.5} />
    </div>
    {tabPlus && <button aria-label="Ajouter" className="grid w-8 place-items-center text-gray-400"><Plus className="h-3.5 w-3.5" /></button>}
    <div className="flex-1" />
    <div className="w-16 border-x border-black bg-[#2c3034] pr-1 text-right leading-[14px] text-[#1fe03a]">
      <div>▲{pct}</div>
      <div>{pts}</div>
    </div>
    <div className="relative flex font-bold">
      <button className="w-[74px] bg-[#42311f] pb-2">{sell}</button>
      <button className="w-[74px] border-l border-black bg-[#1c3a44] pb-2">{buy}</button>
      <span className="absolute bottom-0 left-1/2 -translate-x-1/2 bg-[#22272e] px-1 text-[10px] font-normal leading-[10px]">{spread}</span>
    </div>
    {windowButtons ? (
      <div className="flex items-center gap-3 pl-1 pr-2 text-gray-400">
        <Gauge lit={lit} />
        <button aria-label="Réduire"><Minimize2 className="h-3 w-3" strokeWidth={1.5} /></button>
        <button aria-label="Détacher"><ExternalLink className="h-3 w-3" strokeWidth={1.5} /></button>
        <button aria-label="Fermer"><X className="h-3.5 w-3.5" strokeWidth={1.5} /></button>
      </div>
    ) : (
      <div className="w-1" />
    )}
  </div>
);

interface ToolBarProps {
  period: string;
  quick: string[];
  range: string;
  ranges: string[];
  models: string[];
  side: string;
  grid?: boolean;
}

const cell = 'flex items-center border-r border-black';
const tiny = 'min-w-[23px] border-r border-black px-1 text-[10px] text-[#fff200]';

const ToolBar: React.FC<ToolBarProps> = ({ period, quick, range, ranges, models, side, grid }) => {
  const Layout = grid ? LayoutGrid : Columns2;
  return (
    <div className="flex h-[22px] border-b border-black bg-[#2d3135] text-[11px] font-bold text-white">
      <button aria-label="Liste" className={`${cell} w-8 justify-center`}><ClipboardList className="h-4 w-4 text-gray-400" strokeWidth={1.5} /></button>
      <button aria-label="Disposition" className={`${cell} w-[33px] justify-center`}><Layout className="h-4 w-4 text-gray-400" strokeWidth={1.5} /></button>
      <button className={`${cell} w-[85px] pl-1.5`}>{period}</button>
      {quick.map((q) => <button key={q} className={tiny}>{q}</button>)}
      <button className={`${cell} w-[90px] pl-1.5`}>{range}</button>
      {ranges.map((q) => <button key={q} className={tiny}>{q}</button>)}
      <button className={`${cell} w-[89px] justify-center gap-2`}><SlidersHorizontal className="h-3.5 w-3.5 text-gray-400" strokeWidth={1.5} />Modèles</button>
      {models.map((q) => <button key={q} className={tiny}>{q}</button>)}
      <button className={`${cell} w-[74px] justify-center gap-2`}><ChartCandlestick className="h-3.5 w-3.5 text-gray-400" strokeWidth={1.5} />{side}</button>
      <button className={`${cell} w-[58px] justify-center gap-2`}><Link2 className="h-3.5 w-3.5 text-gray-400" />Lié</button>
      <div className="flex-1" />
      <button className="flex w-[105px] items-center gap-2 border-l border-black pl-2.5"><Settings className="h-3.5 w-3.5 text-gray-400" strokeWidth={1.5} />Paramètres</button>
    </div>
  );
};

const FOOT_TABS = ['Période', 'Outils De Dessin', 'Indicateurs', 'Figures'];

const FootBar: React.FC<{ favActive?: boolean; crosshair?: boolean }> = ({ favActive, crosshair }) => {
  const ic = 'grid w-[30px] place-items-center border-r border-black';
  const on = 'bg-[#003366] text-white';
  return (
    <div className="flex h-[22px] border-t border-[#4c5156] bg-[#34383d] text-[10px] font-bold text-white">
      <button aria-label="Rafraîchir" className={`${ic} text-gray-400`}><RotateCcw className="h-3.5 w-3.5 -scale-x-100" /></button>
      <button aria-label="Effacer" className={`${ic} text-gray-400`}><Ban className="h-3.5 w-3.5" /></button>
      <button aria-label="Dessiner" className={`${ic} ${on}`}><Pencil className="h-3.5 w-3.5" fill="currentColor" /></button>
      <button aria-label="Aimanter" className={`${ic} ${on}`}><ChevronsUpDown className="h-3.5 w-3.5" strokeWidth={3} /></button>
      <div className="flex-1" />
      <button className={`flex w-[100px] items-center justify-between border-x border-black px-2 ${favActive ? 'bg-[#003366]' : ''}`}>
        Favoris
        <Star className={`h-3.5 w-3.5 ${favActive ? 'text-white' : 'text-gray-400'}`} fill="currentColor" strokeWidth={1} />
      </button>
      {FOOT_TABS.map((t) => <button key={t} className="w-[100px] border-r border-black">{t}</button>)}
      <div className="flex-1" />
      <button aria-label="Ajuster" className={`${ic} border-l text-gray-400`}><MoveHorizontal className="h-3.5 w-3.5" /></button>
      <button aria-label="Zoom arrière" className={`${ic} text-gray-400`}><Minus className="h-3.5 w-3.5" /></button>
      <button aria-label="Zoom avant" className={`${ic} text-gray-400`}><Plus className="h-3.5 w-3.5" /></button>
      <button aria-label="Réticule" className={`${ic} ${crosshair ? on : 'text-gray-400'}`}><Plus className="h-4 w-4" strokeWidth={1.5} /></button>
      <button aria-label="Échelle" className={`${ic} ${on}`}><UnfoldVertical className="h-3.5 w-3.5" /></button>
    </div>
  );
};

/* ---------- quote widgets ---------- */

interface QuoteProps {
  className: string;
  name: string;
  sub?: string;
  search?: boolean;
  pct: string;
  pts: string;
  spread: string;
  sell: [string, string];
  buy: [string, string];
  low: string;
  high: string;
  amount?: string;
  lit?: boolean;
}

const Price = ({ v }: { v: [string, string] }) => (
  <span className="text-2xl leading-8 text-white">
    {v[0]}
    <span className="text-lg leading-8">{v[1]}</span>
  </span>
);

const Quote: React.FC<QuoteProps> = ({ className, name, sub, search, pct, pts, spread, sell, buy, low, high, amount = '-', lit }) => (
  <section className={`absolute w-[251px] rounded-t bg-[#2c3037] shadow-md shadow-black ${className}`}>
    <div className="flex h-[31px] rounded-t border-b border-t border-b-black border-t-[#6b7079] bg-linear-to-b from-[#474c54] to-[#3d424a] text-white">
      <button aria-label="Menu" className="grid w-[31px] place-items-center border-r border-black text-gray-400"><Menu className="h-4 w-4" /></button>
      <div className="flex items-center gap-1.5 border-r border-black bg-[#303338] px-2 text-left font-bold">
        {sub ? <span className="text-[9px] leading-[11px]">{name}<br />{sub}</span> : <span className="text-[10px]">{name}</span>}
        {search && <Search className="h-4 w-4 text-gray-400" strokeWidth={1.5} />}
      </div>
      <div className="flex-1" />
      <div className="w-16 bg-[#2c3034] pr-1 text-right text-[11px] leading-[14px] text-[#1fe03a]">
        <div>▲ {pct}</div>
        <div>{pts}</div>
      </div>
      <div className="flex items-center gap-2 px-1 text-gray-400">
        <Gauge lit={lit} />
        <button aria-label="Fermer"><X className="h-3.5 w-3.5" strokeWidth={1.5} /></button>
      </div>
    </div>
    <div className="relative grid h-[76px] grid-cols-2 divide-x divide-black bg-linear-to-b from-[#33373d] to-[#25282e] text-[11px]">
      <button className="flex flex-col justify-between px-1.5 text-left">
        <span className="leading-4 text-[#a86c10]">VENDRE</span>
        <span className="text-center"><Price v={sell} /></span>
        <span className="leading-5 text-gray-400">B:{low}</span>
      </button>
      <button className="flex flex-col justify-between px-1.5 text-right">
        <span className="leading-4 text-[#0a8ba3]">ACHETER</span>
        <span className="text-center"><Price v={buy} /></span>
        <span className="leading-5 text-gray-400">H:{high}</span>
      </button>
      <span className="absolute left-1/2 top-0 w-10 -translate-x-1/2 border border-black bg-[#3b3f45] text-center leading-[14px] text-gray-300">{spread}</span>
      <div className="absolute bottom-0 left-[85px] flex h-4 border border-black">
        <input aria-label={`Montant ${name}`} defaultValue={amount} className="w-[65px] bg-[#003640] text-center text-white" />
        <button aria-label="Choisir" className="grid w-4 place-items-center bg-[#2c3037] text-gray-300"><ChevronDown className="h-3 w-3" /></button>
      </div>
    </div>
  </section>
);

const Field: React.FC<{ id: string; value: string; dim?: boolean }> = ({ id, value, dim }) => (
  <input
    id={id}
    defaultValue={value}
    className={`h-7 w-[86px] rounded-sm border border-[#35475a] bg-[#0e1014] text-center ${dim ? 'text-xs text-gray-400' : 'text-[11px] font-bold text-white'}`}
  />
);

const Ticket = () => (
  <section className="absolute left-[1616px] top-px w-[251px] rounded-t bg-[#1d2125] text-xs text-white shadow-md shadow-black">
    <div className="flex h-[31px] rounded-t border-b border-t border-b-black border-t-[#6b7079] bg-linear-to-b from-[#474c54] to-[#3d424a]">
      <button aria-label="Menu" className="grid w-[31px] place-items-center border-r border-black text-gray-400"><Menu className="h-4 w-4" /></button>
      <div className="flex items-center gap-1.5 border-r border-black bg-[#303338] px-2 text-[11px] font-bold">
        Allemagne 40
        <Search className="h-4 w-4 text-gray-400" strokeWidth={1.5} />
      </div>
      <div className="flex flex-1 items-center justify-end gap-2.5 pr-2 text-gray-400">
        <Gauge lit />
        <button aria-label="Fermer"><X className="h-3.5 w-3.5" strokeWidth={1.5} /></button>
      </div>
    </div>
    <div className="relative grid h-[71px] grid-cols-2 border-b border-black text-[11px]">
      <button className="flex flex-col bg-[#2c3037] px-1.5 text-left">
        <span className="leading-4 text-[#a86c10]">VENDRE</span>
        <span className="text-center leading-9"><Price v={['13973,', '73']} /></span>
        <span className="leading-4 text-gray-400">B:13 911,10</span>
      </button>
      <button className="flex flex-col border-l border-black bg-[#214a50] px-1.5 text-right">
        <span className="leading-4 text-[#00d0f0]">ACHETER</span>
        <span className="text-center leading-9"><Price v={['13974,', '73']} /></span>
        <span className="leading-4 text-gray-400">H:14 002,93</span>
      </button>
      <div className="absolute left-20 top-0 flex h-4 w-[92px] border border-black bg-[#3b3f45] text-[#00d0f0]">
        <select aria-label="Niveau" className="flex-1 appearance-none border-r border-black text-center leading-[14px]">
          <option>Niveau 1</option>
        </select>
        <ChevronDown className="m-auto h-3 w-4" />
      </div>
      <span className="absolute bottom-0 left-1/2 w-10 -translate-x-1/2 border border-black bg-[#22272e] text-center font-bold leading-[14px]">1,00</span>
    </div>
    <div className="flex h-[66px] items-end gap-1.5 border-b border-[#35383c] px-1.5 pb-2.5">
      <div className="flex flex-col items-center gap-0.5 text-[#0a8ba3]">
        <label htmlFor="units">Unités</label>
        <Field id="units" value="0,01" />
      </div>
      <div className="flex flex-col items-center gap-0.5 text-[#0a8ba3]">
        <label htmlFor="amount">Montant (€)</label>
        <Field id="amount" value="139,74" dim />
      </div>
      <button className="w-14">
        <span className="block h-[22px] bg-[#009ab5] text-[11px] font-bold leading-[22px]">Marché</span>
        <span className="grid h-[22px] place-items-center bg-[#484c52] text-[#00d0f0]"><ChevronDown className="h-3 w-3" /></span>
      </button>
    </div>
    <div className="flex h-[88px] items-start gap-1.5 border-b border-[#35383c] bg-[#14161a] px-1.5 pt-1">
      <div>
        <label htmlFor="stop" className="flex h-[22px] items-center gap-1.5 text-[#e81010]"><ArrowDown className="h-3.5 w-3.5 bg-[#252b33] text-[#ffa000]" />Stop Loss</label>
        <Field id="stop" value="13966,73" dim />
      </div>
      <div className="text-right text-gray-400">
        <label htmlFor="points" className="flex h-[22px] items-center gap-4"><Activity className="h-3.5 w-3.5 bg-[#252b33] text-[#ff3030]" />Points</label>
        <Field id="points" value="8,00" />
        <div className="pt-2 text-[11px] text-gray-500">Montant (€) 0,08</div>
      </div>
      <div className="w-14 text-right">
        <button aria-label="Retirer le stop" className="inline-grid h-3.5 w-3.5 place-items-center bg-[#252b33] text-[#ff3030]"><X className="h-3.5 w-3.5" /></button>
        <button className="block w-14">
          <span className="block h-[22px] bg-[#e00000] text-center text-[10px] font-bold leading-[22px]">Classique</span>
          <span className="grid h-[22px] place-items-center bg-[#484c52] text-[#ff3030]"><ChevronDown className="h-3 w-3" /></span>
        </button>
      </div>
    </div>
    <div className="bg-[#14161a]">
      <button className="flex h-[28px] w-full items-center border-b border-[#35383c] px-2 text-[11px] text-[#10b828]">+ Take Profit</button>
      <div className="flex h-[29px] items-center justify-between border-b border-[#35383c] px-2.5 text-[11px] font-bold text-[#dfe9ee]"><span>&gt; Marge Estimée (€)</span><span>6,98</span></div>
      <div className="flex h-[29px] items-center justify-between border-b border-[#35383c] px-2.5 text-[11px] font-bold text-[#dfe9ee]"><span>&gt; Coûts Estimés (€)</span><span>0,02</span></div>
      <a href="#infos" className="flex h-[29px] items-center justify-between border-b border-[#35383c] pl-5 pr-2.5">Document d'Informations clés<Download className="h-3.5 w-3.5 text-gray-400" /></a>
    </div>
    <div className="px-3 py-3">
      <button className="h-[37px] w-full rounded-sm bg-[#009fbc] text-sm">Placer Ordre au Marché d'Achat</button>
    </div>
  </section>
);

const Positions = () => (
  <section className="absolute left-[819px] top-[902px] h-[124px] w-[1069px] rounded-t bg-[#1a1b1e] text-white shadow-md shadow-black">
    <div className="flex h-[31px] rounded-t border-b border-t border-b-black border-t-[#6b7079] bg-linear-to-b from-[#474c54] to-[#3d424a]">
      <button aria-label="Menu" className="grid w-[31px] place-items-center border-r border-black text-gray-400"><Menu className="h-4 w-4" /></button>
      <button className="flex items-center gap-2 bg-[#303338] px-2 text-[11px] font-bold">Positions (0)<X className="h-3 w-3 text-gray-400" /></button>
      <button className="border-r border-black px-2 text-gray-300">Carnet des Ordres Exécutés</button>
      <button aria-label="Ajouter" className="px-2 text-gray-400"><Plus className="h-3.5 w-3.5" /></button>
      <div className="flex flex-1 items-center justify-end gap-2.5 pr-2 text-gray-400">
        <Gauge lit />
        <button aria-label="Agrandir"><Maximize2 className="h-3 w-3" strokeWidth={1.5} /></button>
        <button aria-label="Fermer"><X className="h-3.5 w-3.5" strokeWidth={1.5} /></button>
      </div>
    </div>
    <table className="w-full table-fixed text-[10px]">
      <thead>
        <tr className="h-[23px] border-b border-black bg-[#14171b] text-right text-gray-300 *:border-r *:border-[#26292e] *:pr-1.5">
          <th className="w-[31px] text-gray-500">▷</th>
          <th className="w-[266px] pl-2 text-left text-white">POSITION/ORDRE N° ▲</th>
          <th className="w-8">A/V</th>
          <th className="w-[99px]">UNITÉS</th>
          <th className="w-[100px]">COURS</th>
          <th className="w-[140px]">PV&amp;MV TOTALES ⇕</th>
          <th className="w-[100px]">STOP LOSS</th>
          <th className="w-[100px]">TAKE PROFIT</th>
          <th className="w-[75px] text-[#e88a10]">VENTE</th>
          <th className="w-[74px] text-[#10a8d8]">ACHAT</th>
          <td />
        </tr>
      </thead>
      <tbody>
        <tr>
          <td colSpan={11} className="px-[175px]">
            <div className="flex h-[49px] items-center gap-3 bg-[#222327] text-[13px] text-[#7fa3ba]">
              <span className="grid h-full w-[42px] place-items-center bg-[#2b2f38]"><Info className="h-5 w-5" fill="#7fa3ba" stroke="#2b2f38" /></span>
              Aucune Transaction Ou Position.
            </div>
          </td>
        </tr>
      </tbody>
    </table>
  </section>
);

/* ---------- browser windows ---------- */

const BrowserBar = () => (
  <div className="font-['Open_Sans',sans-serif]">
    <div className="flex h-[25px] items-center gap-2 border-b border-[#b5b7ba] bg-[#e8eaed] pl-2 text-xs text-[#8a8c90]">
      <CmcLogo className="h-3 w-3 text-[#18a8d0]" />
      CMC Markets - Google Chrome
      <div className="flex flex-1 justify-end gap-8 pr-4">
        <button aria-label="Réduire"><Minus className="h-3.5 w-3.5" strokeWidth={1.5} /></button>
        <button aria-label="Restaurer"><Copy className="h-3 w-3 -scale-x-100" strokeWidth={1.5} /></button>
        <button aria-label="Fermer"><X className="h-3.5 w-3.5" strokeWidth={1.5} /></button>
      </div>
    </div>
    <div className="flex h-7 items-center gap-2.5 border-b-2 border-[#0b1114] bg-[#f1f3f4] pl-3 text-sm text-[#5f6368]">
      <Lock className="h-3 w-3" fill="currentColor" />
      <span>
        <span className="text-[#202124]">platform.cmcmarkets.com</span>/popout.html#/app?r=FR&amp;b=CMC-CFD
      </span>
    </div>
  </div>
);

const TaskBar = () => (
  <div className="relative flex h-[46px] items-center justify-center gap-[19px] bg-[#d9d9d9] font-['Open_Sans',sans-serif] text-xs text-[#1c1c1c]">
    <button aria-label="Démarrer">
      <svg className="h-6 w-6" viewBox="0 0 24 24" fill="#0a84dc"><path d="M0 0h11.5v11.5H0zM12.5 0H24v11.5H12.5zM0 12.5h11.5V24H0zM12.5 12.5H24V24H12.5z" /></svg>
    </button>
    <button className="-mx-1 flex h-[30px] items-center gap-2 rounded-full bg-[#f5f5f5] px-5"><Search className="h-3.5 w-3.5 -scale-x-100" />Recherche</button>
    <button aria-label="Vues">
      <svg className="h-6 w-6" viewBox="0 0 24 24"><path d="M7 0h16v18H7z" fill="#f6f6f6" /><path d="M1 8h16v14H1z" fill="#333" /><path d="M7 8h10v9H7z" fill="#9a9a9a" /></svg>
    </button>
    <button aria-label="Explorateur">
      <svg className="h-6 w-6" viewBox="0 0 24 24"><path d="M0 3h9l2 3h13v16H0z" fill="#e0a010" /><path d="M0 8h24v14H0z" fill="#ffcf48" /><path d="M5 15h14v8H5z" fill="#1878d0" /></svg>
    </button>
    <button aria-label="Chrome" className="-mx-1 grid h-10 w-8 place-items-center rounded border-b-3 border-[#0a78d4] bg-[#f2f2f2]">
      <svg className="h-6 w-6" viewBox="0 0 24 24">
        <path d="M12 12 L1.6 6 A12 12 0 0 1 22.4 6z" fill="#e33b2e" />
        <path d="M12 12 L22.4 6 A12 12 0 0 1 12 24z" fill="#fcc31e" />
        <path d="M12 12 L12 24 A12 12 0 0 1 1.6 6z" fill="#2da94f" />
        <circle cx="12" cy="12" r="5.5" fill="#fff" />
        <circle cx="12" cy="12" r="4.2" fill="#3b7ded" />
      </svg>
    </button>
    <button aria-label="Paramètres système">
      <svg className="h-6 w-6" viewBox="0 0 24 24">
        <circle cx="12" cy="12" r="9.5" fill="#6f7f8f" stroke="#6f7f8f" strokeWidth="4" strokeDasharray="5 5" />
        <circle cx="12" cy="12" r="6" fill="#d8e4f0" />
        <circle cx="12" cy="12" r="4.5" fill="#1060b0" />
      </svg>
    </button>
    <button aria-label="Capture">
      <svg className="h-6 w-6" viewBox="0 0 24 24" fill="none">
        <path d="M1 1h15v14H1z" fill="#fff" />
        <path d="M3 10V3h10" stroke="#d83b20" strokeWidth="3" strokeDasharray="3 1" />
        <path d="M9 12l12 3M14 6v12" stroke="#666" strokeWidth="2" />
        <circle cx="21" cy="16" r="2" stroke="#1890e0" strokeWidth="2" />
        <circle cx="14" cy="21" r="2" stroke="#1890e0" strokeWidth="2" />
      </svg>
    </button>
    <button aria-label="TradingView">
      <svg className="h-6 w-6" viewBox="0 0 24 24"><path d="M0 0h24v24H0z" fill="#131722" /><path d="M3 7h8v10H7.500v-6H3z" fill="#fff" /><circle cx="13.500" cy="9" r="1.800" fill="#fff" /><path d="M17 7h4l-4 10h-4z" fill="#fff" /></svg>
    </button>
    <div className="absolute right-[18px] top-1.5 text-right text-[11px] leading-4 text-[#555]">
      <div>09:50</div>
      <div>21/12/2022</div>
    </div>
  </div>
);

/* ---------- drawing tools ---------- */

const Knob = ({ x, y }: { x: number; y: number }) => <circle cx={x} cy={y} r="2.5" fill="#22262d" stroke="#999" strokeWidth="1.5" />;

const TOOLS: { label: string; art: React.ReactNode }[] = [
  { label: 'Ligne De ...', art: <><path d="M10 24 26 16" stroke="#ffee00" strokeWidth="2" /><Knob x={10} y={25} /><Knob x={28} y={16} /></> },
  { label: 'Ligne S/r', art: <><path d="M12 20h16" stroke="#ffee00" strokeWidth="2" /><Knob x={10} y={20} /><Knob x={29} y={20} /></> },
  { label: 'Cours', art: <><path d="M12 12h15v18H12z" fill="#1c4858" /><path d="M9 11h20M9 30h20" stroke="#00b8ff" strokeWidth="2" /><path d="M20 28V15m-4 4 4-4 4 4" stroke="#9ab" /><Knob x={29} y={11} /><Knob x={11} y={30} /></> },
  { label: 'Fixe', art: <><path d="M20 12v16" stroke="#ffee00" strokeWidth="2" /><Knob x={20} y={11} /><Knob x={20} y={30} /></> },
  { label: 'Nb', art: <><Knob x={13} y={19} /><path d="M18 28 24 13 30 28M20 23h8" stroke="#999" strokeWidth="2" /></> },
  { label: 'Fibonacci', art: <><path d="M14 11h18M8 30h24" stroke="#00b8ff" strokeWidth="2" /><path d="M8 17h24M8 21h24M8 25h24" stroke="#888" strokeDasharray="2 1" /><path d="M12 12 22 29" stroke="#00b8ff" strokeWidth="2" /><Knob x={11} y={11} /><Knob x={23} y={30} /></> },
  { label: 'Rectangle', art: <><path d="M11 12h18v17H11z" stroke="#00ff20" strokeWidth="2" /><Knob x={29} y={12} /><Knob x={11} y={29} /></> },
  { label: 'Ovale', art: <ellipse cx="20" cy="20" rx="12" ry="9" transform="rotate(-25 20 20)" stroke="#00ff20" strokeWidth="2" /> },
  { label: 'Flèche', art: <><path d="M10 30 24 17" stroke="#999" strokeWidth="3" strokeDasharray="3 2" /><path d="M19 11h11v9z" fill="#999" /></> },
  { label: 'Vague Mo...', art: <><path d="m12 20 8 10 9-18" stroke="#ff5010" strokeWidth="2" /><Knob x={11} y={20} /><Knob x={20} y={30} /><Knob x={29} y={11} /></> },
  { label: 'Vague Co...', art: <><path d="m12 30 5-15 8 9 5-13" stroke="#ff5010" strokeWidth="2" strokeDasharray="4 2" /><Knob x={11} y={21} /><Knob x={18} y={15} /><Knob x={26} y={22} /><Knob x={29} y={11} /><Knob x={16} y={30} /></> },
];

const ToolBox = () => (
  <div className="flex h-[71px] overflow-hidden border-t-2 border-[#333a40] bg-[#181d20] pt-2">
    <div className="-mt-2 w-[22px] shrink-0 border-r border-black" />
    {TOOLS.map(({ label, art }) => (
      <button key={label} className="flex w-[60px] shrink-0 flex-col items-center gap-0.5 text-[11px] text-gray-400">
        <svg className="h-[42px] w-[42px] rounded border border-black bg-[#22262d]" viewBox="0 0 40 40" fill="none">{art}</svg>
        <span className="whitespace-nowrap leading-4">{label}</span>
      </button>
    ))}
    {Array.from({ length: 20 }, (_, i) => (
      <div key={i} className="w-[60px] shrink-0">
        <div className="mx-auto h-[42px] w-[42px] rounded bg-[#0a0c0d]" />
      </div>
    ))}
  </div>
);

/* ---------- screens ---------- */

const MARKET_TABS = ['Allemagne 40', 'US 30', 'US NDAQ 100', 'US SPX 500'];

const DemoScreen = () => (
  <section className="bg-black">
    <Header mode="Demo" modeClass="text-[#10b8e0]" account="20600479" tabs={['Devises', 'Indices', 'Commodities']} active="Indices" dimWindows />
    <div className="flex h-6 items-center gap-1 pl-0.5 text-[11px] font-bold text-white">
      {MARKET_TABS.map((t, i) => (
        <button key={t} className={`h-[19px] rounded-sm px-[21px] ${i === 0 ? 'bg-[#003366]' : 'bg-[#4b5057]'}`}>{t}</button>
      ))}
    </div>
    <TitleBar num="1" name="Allemagne 40" pct="0,13 %" pts="19,2" sell="13 974,72" buy="13 975,72" spread="1,00" tabPlus windowButtons />
    <ToolBar period="30 minutes" quick={['15m', '30m', '4h']} range="3 Mois" ranges={['SLS', '3J', '1S']} models={['1', '7']} side="Vente" />
    <div className="grid grid-cols-2">
      <Chart4h />
      <Chart30m />
    </div>
    <FootBar crosshair />
  </section>
);

const MarsPopout = () => (
  <section className="bg-black">
    <div className="h-0.5 bg-white" />
    <BrowserBar />
    <TitleBar num="1" name="Allemagne 40 - Mar 2023" pct="0,12 %" pts="17,55" sell="14 040,5" buy="14 042,5" spread="-" />
    <ToolBar period="5 minutes" quick={['1m', '2m', '5m']} range="8 Jours" ranges={['SLS', '1J', '1S']} models={['1', '5', '6']} side="Vente" grid />
    <Chart5m />
    <FootBar />
    <TaskBar />
  </section>
);

const LiveScreen = () => (
  <section className="bg-[#0c141c]">
    <Header mode="Réel" modeClass="font-bold text-[#fff200]" account="21978566" tabs={['Trade', 'Action Europe', 'Action Usa']} active="Trade" withNote />
    <div className="relative h-[1029px]">
      <section className="absolute left-0.5 top-px w-[1552px] bg-black">
        <TitleBar num="1" name="Allemagne 40" pct="0,13 %" pts="18,21" sell="13 973,73" buy="13 974,73" spread="1,00" tabPlus windowButtons lit />
        <ToolBar period="30 secondes" quick={['1m', '2m', '5m']} range="5 heures" ranges={['SLS', '1J', '1S']} models={['1', '5', '6']} side="Achat" grid />
        <Chart30s />
        <FootBar crosshair />
      </section>
      <Ticket />
      <Quote className="left-[1617px] top-[450px]" name="Allemagne 40" pct="0,13 %" pts="18,21" spread="1,00" sell={['13973,', '73']} buy={['13974,', '73']} low="13 911,10" high="14 002,93" amount="0,01" lit />
      <Quote className="left-[1616px] top-[559px]" name="US SPX 500" sub="Mar 2023" search pct="0,28 %" pts="11" spread="7,0" sell={['3864,1', '5']} buy={['3864,8', '5']} low="3 856,03" high="3 875,48" />
      <Quote className="left-[1615px] top-[668px]" name="US NDAQ 100" sub="Mar 2023" pct="0,29 %" pts="32,5" spread="3,0" sell={['11224,', '4']} buy={['11227,', '4']} low="11 197,8" high="11 264,4" />
      <Quote className="left-[1614px] top-[784px]" name="US 30" sub="Mar 2023" search pct="0,29 %" pts="98,5" spread="4,0" sell={['33213,', '0']} buy={['33217,', '0']} low="33 141,0" high="33 293,0" />
      <Quote className="left-[15px] top-[905px]" name="US SPX 500" search pct="0,28 %" pts="10,75" spread="6,0" sell={['3836,4', '7']} buy={['3837,0', '7']} low="3 828,04" high="3 847,27" />
      <Quote className="left-[285px] top-[907px]" name="US NDAQ 100" pct="0,29 %" pts="32,52" spread="2,00" sell={['11122,', '04']} buy={['11124,', '04']} low="11 095,48" high="11 160,19" amount="0,02" />
      <Quote className="left-[554px] top-[911px]" name="US 30" search pct="0,3 %" pts="99,72" spread="3,00" sell={['33008,', '59']} buy={['33011,', '59']} low="32 935,61" high="33 084,24" />
      <Positions />
    </div>
  </section>
);

const MinutePopout = () => (
  <section className="bg-black">
    <div className="h-px bg-white" />
    <BrowserBar />
    <TitleBar num="4" name="Allemagne 40" pct="0,13 %" pts="19,2" sell="13 974,72" buy="13 975,72" spread="-" />
    <ToolBar period="1 minute" quick={['1m', '2m', '5m']} range="4 heures" ranges={['SLS', '1J', '1S']} models={['1', '5', '6']} side="Achat" grid />
    <Chart1m />
    <ToolBox />
    <FootBar favActive />
    <TaskBar />
  </section>
);

const App = () => (
  <main className="grid grid-cols-2 overflow-hidden bg-black font-['Liberation_Sans',Arial,sans-serif] text-xs">
    <DemoScreen />
    <MarsPopout />
    <LiveScreen />
    <MinutePopout />
  </main>
);

export default App;
